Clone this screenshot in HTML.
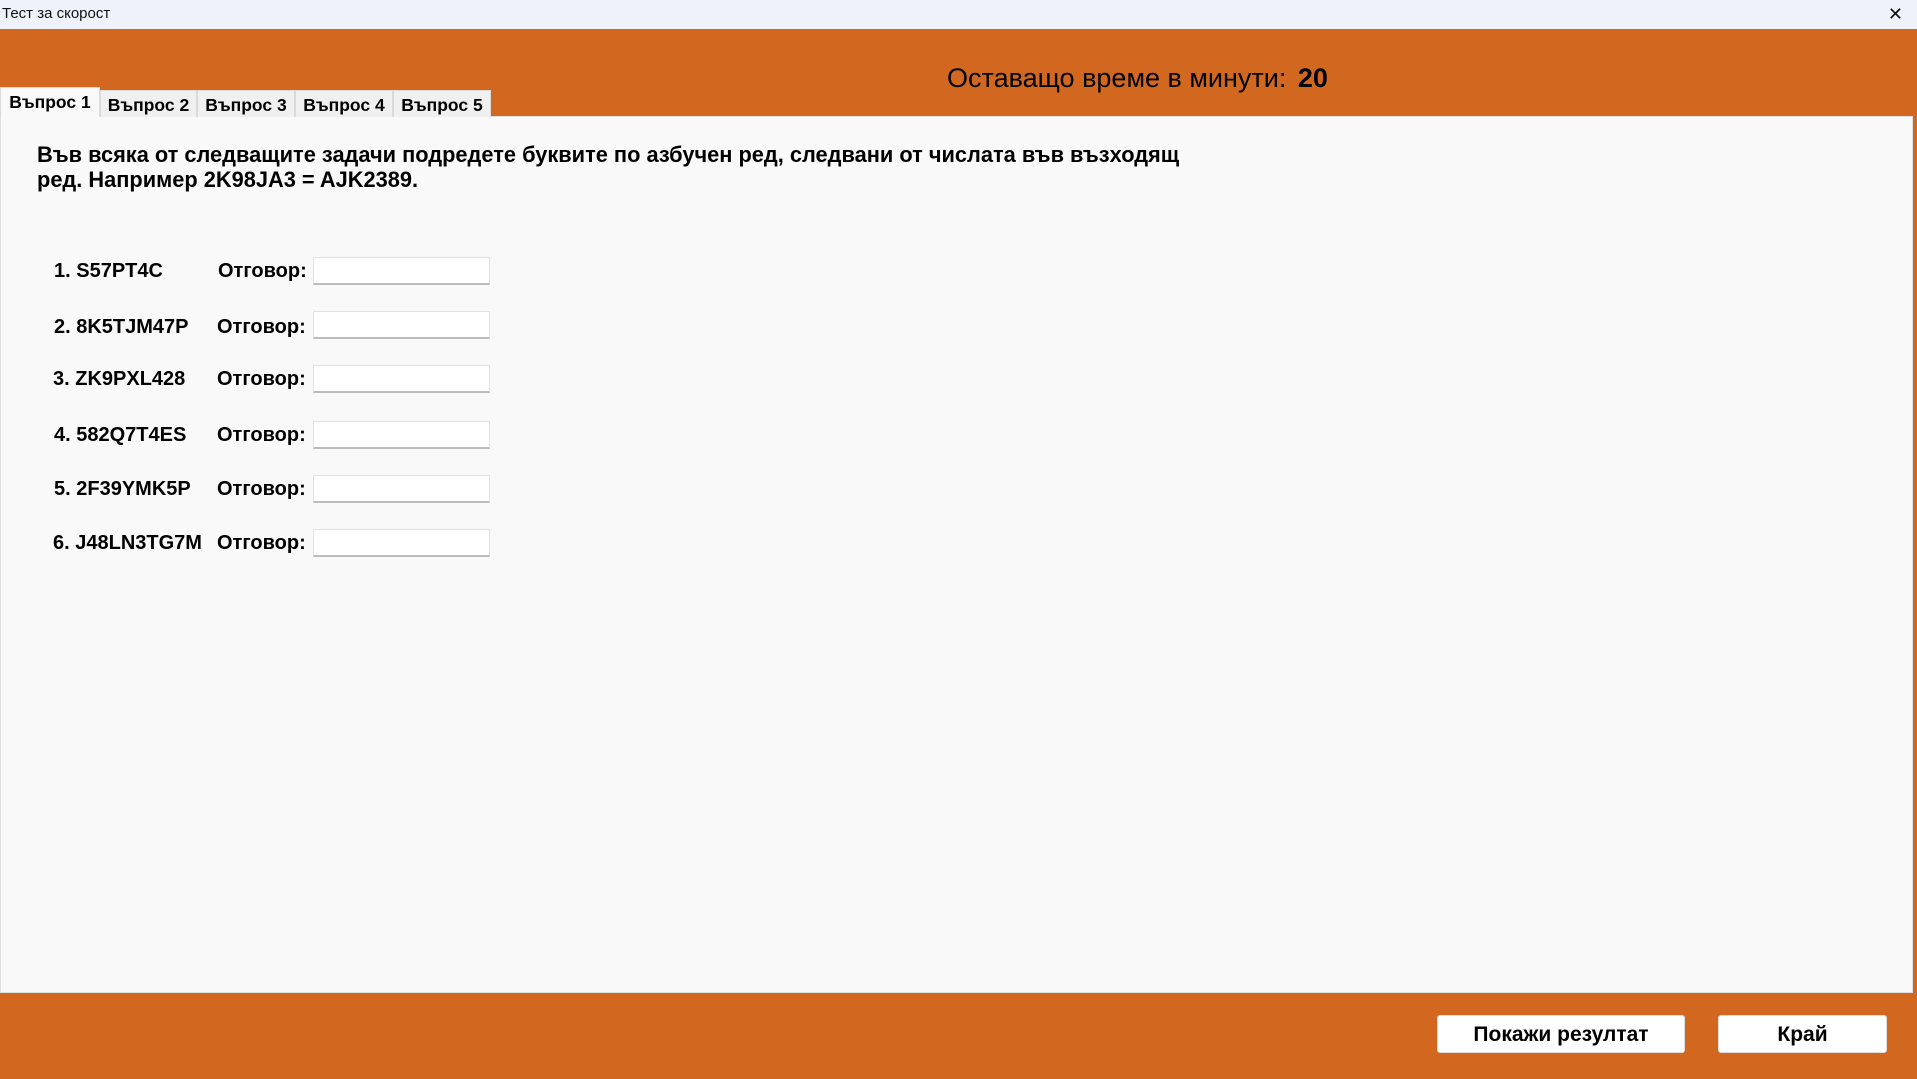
<!DOCTYPE html>
<html><head><meta charset="utf-8"><style>
*{margin:0;padding:0;box-sizing:border-box}
body{width:1917px;height:1079px;position:relative;background:#d2681f;font-family:"Liberation Sans",sans-serif;overflow:hidden}
.title{position:absolute;left:0;top:0;width:1917px;height:29px;background:#eef3fb;font-size:15px;color:#111;padding:5px 0 0 2px}
.x{position:absolute;right:14px;top:4px;font-size:18px;font-weight:300}
.timer{position:absolute;left:947px;top:63px;font-size:27px;color:#000}
.timer b{margin-left:4px}
.panel{position:absolute;left:0;top:116px;width:1913px;height:877px;background:#f9f9f9;border:1px solid #e0e0e0}
.tab{position:absolute;top:90px;height:27px;background:#f0f0f0;border:1px solid #dadada;border-bottom:none;font-weight:bold;font-size:17.5px;padding-top:4px;text-align:center}
.tab.a{top:87px;height:30px;background:#f9f9f9;padding-top:4px;z-index:2}
.ins{position:absolute;left:37px;top:142px;font-size:21.8px;font-weight:bold;line-height:25px;width:1300px}
.lbl{position:absolute;font-size:20px;font-weight:bold}
.inp{position:absolute;left:313px;width:177px;height:28px;background:#fff;border:1px solid #e2e2e2;border-bottom:2px solid #bcbcbc}
.btn{position:absolute;top:1015px;height:38px;background:#fff;border:1px solid #ddd;border-radius:3px;font-weight:bold;font-size:21px;text-align:center;padding-top:7px}
</style></head><body>
<div class="title">Тест за скорост<span class="x">✕</span></div>
<div class="timer">Оставащо време в минути: <b>20</b></div>
<div class="panel"></div>
<div class="tab a" style="left:0;width:100px">Въпрос 1</div>
<div class="tab" style="left:100px;width:97px">Въпрос 2</div>
<div class="tab" style="left:197px;width:98px">Въпрос 3</div>
<div class="tab" style="left:295px;width:98px">Въпрос 4</div>
<div class="tab" style="left:393px;width:98px">Въпрос 5</div>
<div class="ins">Във всяка от следващите задачи подредете буквите по азбучен ред, следвани от числата във възходящ<br>ред. Например 2K98JA3 = AJK2389.</div>
<div class="lbl" style="left:54px;top:260px">1. S57PT4C</div><div class="lbl" style="left:218px;top:260px">Отговор:</div><div class="inp" style="top:257px"></div>
<div class="lbl" style="left:54px;top:316px">2. 8K5TJM47P</div><div class="lbl" style="left:217px;top:316px">Отговор:</div><div class="inp" style="top:311px"></div>
<div class="lbl" style="left:53px;top:368px">3. ZK9PXL428</div><div class="lbl" style="left:217px;top:368px">Отговор:</div><div class="inp" style="top:365px"></div>
<div class="lbl" style="left:54px;top:424px">4. 582Q7T4ES</div><div class="lbl" style="left:217px;top:424px">Отговор:</div><div class="inp" style="top:421px"></div>
<div class="lbl" style="left:54px;top:478px">5. 2F39YMK5P</div><div class="lbl" style="left:217px;top:478px">Отговор:</div><div class="inp" style="top:475px"></div>
<div class="lbl" style="left:53px;top:532px">6. J48LN3TG7M</div><div class="lbl" style="left:217px;top:532px">Отговор:</div><div class="inp" style="top:529px"></div>
<div class="btn" style="left:1437px;width:248px">Покажи резултат</div>
<div class="btn" style="left:1718px;width:169px">Край</div>
</body></html>
